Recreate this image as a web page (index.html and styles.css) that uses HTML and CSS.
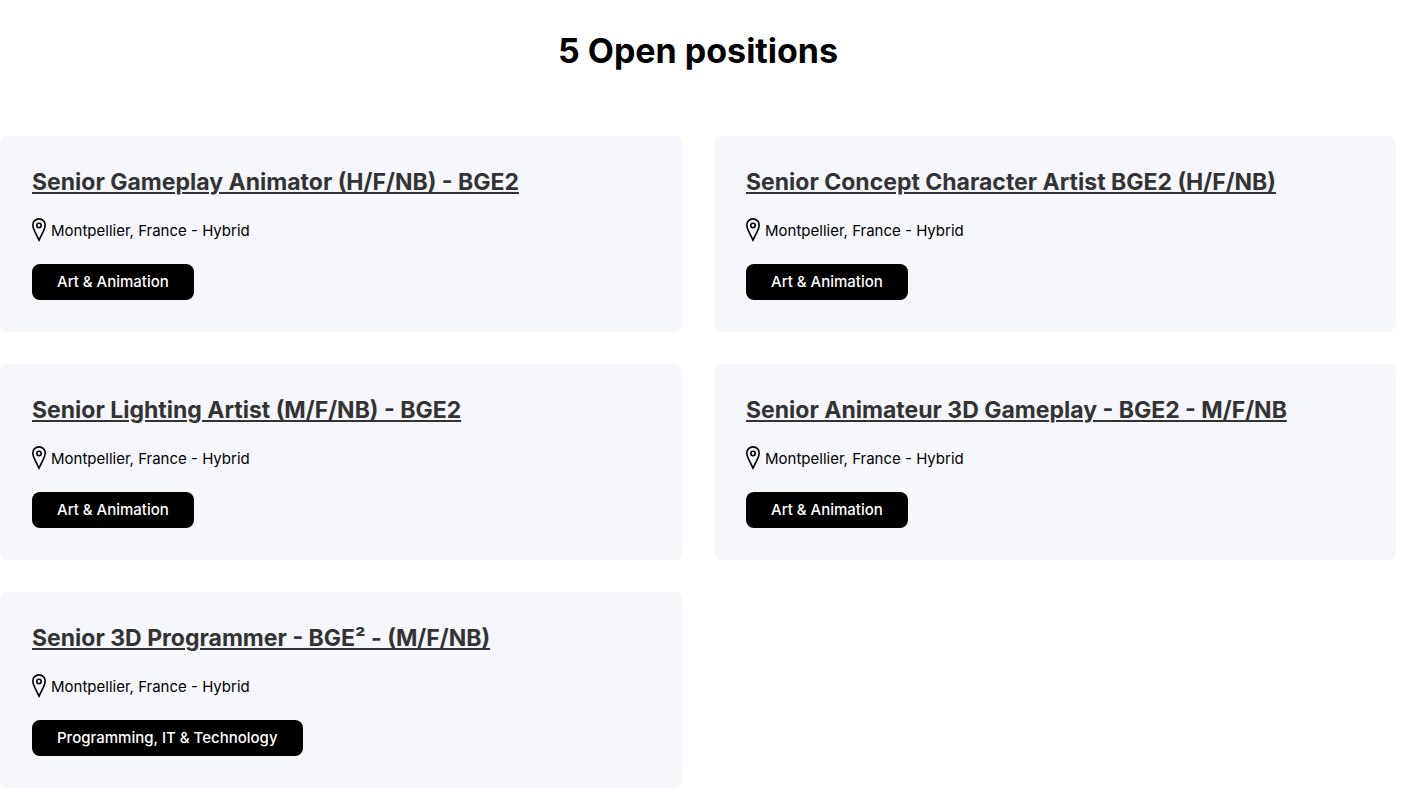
FILE: index.html
```html
<!DOCTYPE html>
<html lang="en">
<head>
    <meta charset="UTF-8">
    <meta name="viewport" content="width=device-width, initial-scale=1.0">
    <title>Open positions</title>
    <link rel="stylesheet" href="styles.css">
</head>
<body>

    <!-- pin icon shared by all the cards -->
    <svg class="sprite" aria-hidden="true">
        <symbol id="pin" viewBox="0 0 14 24">
            <path d="M7 0.9C3.4 0.9 0.8 3.6 0.8 7C0.8 9.2 1.7 11.2 2.7 13.3L7 22.2L11.3 13.3C12.3 11.2 13.2 9.2 13.2 7C13.2 3.6 10.6 0.9 7 0.9Z"/>
            <circle cx="7" cy="7.5" r="2.2"/>
        </symbol>
    </svg>

    <h1>5 Open positions</h1>

    <ul class="jobs">
        <li class="card">
            <h2><a href="#">Senior Gameplay Animator (H/F/NB) - BGE2</a></h2>
            <p class="location"><svg class="pin"><use href="#pin"/></svg>Montpellier, France - Hybrid</p>
            <span class="tag">Art &amp; Animation</span>
        </li>
        <li class="card">
            <h2><a href="#">Senior Concept Character Artist BGE2 (H/F/NB)</a></h2>
            <p class="location"><svg class="pin"><use href="#pin"/></svg>Montpellier, France - Hybrid</p>
            <span class="tag">Art &amp; Animation</span>
        </li>
        <li class="card">
            <h2><a href="#">Senior Lighting Artist (M/F/NB) - BGE2</a></h2>
            <p class="location"><svg class="pin"><use href="#pin"/></svg>Montpellier, France - Hybrid</p>
            <span class="tag">Art &amp; Animation</span>
        </li>
        <li class="card">
            <h2><a href="#">Senior Animateur 3D Gameplay - BGE2 - M/F/NB</a></h2>
            <p class="location"><svg class="pin"><use href="#pin"/></svg>Montpellier, France - Hybrid</p>
            <span class="tag">Art &amp; Animation</span>
        </li>
        <li class="card">
            <h2><a href="#">Senior 3D Programmer - BGE² - (M/F/NB)</a></h2>
            <p class="location"><svg class="pin"><use href="#pin"/></svg>Montpellier, France - Hybrid</p>
            <span class="tag">Programming, IT &amp; Technology</span>
        </li>
    </ul>

</body>
</html>
```
FILE: styles.css
```css
* {
    box-sizing: border-box;
}

body {
    margin: 0;
    padding: 24px 5px 16px 0;
    font-family: Inter, sans-serif;
    background-color: white;
    color: black;
}

.sprite {
    display: none;
}

h1 {
    margin: 0 0 58px;
    font-size: 34px;
    line-height: 54px;
    font-weight: 700;
    text-align: center;
}

.jobs {
    display: grid;
    grid-template-columns: 1fr 1fr;
    gap: 32px;
    margin: 0;
    padding: 0;
    list-style: none;
}

.card {
    padding: 32px;
    border-radius: 8px;
    background-color: #f5f7fb;
}

h2 {
    margin: 0 0 20px;
    font-size: 23px;
    line-height: 28px;
    font-weight: 700;
}

h2 a {
    color: #333;
    text-decoration: underline;
    text-decoration-thickness: 2px;
    text-underline-offset: 2px;
}

.location {
    display: flex;
    align-items: center;
    gap: 5px;
    height: 28px;
    margin: 0 0 20px;
    font-size: 15px;
}

.pin {
    width: 14px;
    height: 24px;
    fill: none;
    stroke: black;
    stroke-width: 1.6;
}

.tag {
    display: inline-block;
    padding: 0 25px;
    border-radius: 8px;
    background-color: black;
    color: white;
    font-size: 15px;
    font-weight: 500;
    line-height: 36px;
    vertical-align: top;
}
```
